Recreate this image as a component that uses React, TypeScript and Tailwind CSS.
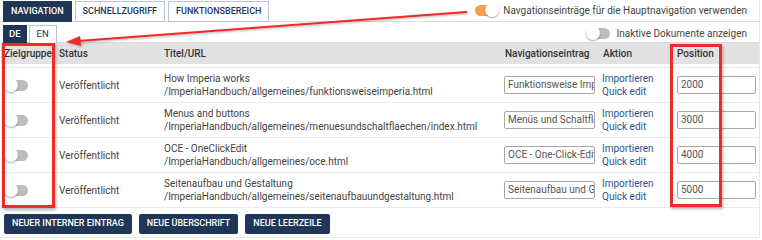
import React from "react";

const rows = [
  { t: "How Imperia works", u: "/ImperiaHandbuch/allgemeines/funktionsweiseimperia.html", n: "Funktionsweise Imperia", p: "2000" },
  { t: "Menus and buttons", u: "/ImperiaHandbuch/allgemeines/menuesundschaltflaechen/index.html", n: "Menüs und Schaltflächen", p: "3000" },
  { t: "OCE - OneClickEdit", u: "/ImperiaHandbuch/allgemeines/oce.html", n: "OCE - One-Click-Edit", p: "4000" },
  { t: "Seitenaufbau und Gestaltung", u: "/ImperiaHandbuch/allgemeines/seitenaufbauundgestaltung.html", n: "Seitenaufbau und Gestaltung", p: "5000" },
];

function Toggle({ on }: { on?: boolean }) {
  return (
    <div className={`relative w-[23px] h-[11px] rounded-full ${on ? "bg-[#f5a04c]" : "bg-[#bdbdbd]"}`}>
      <div
        className={`absolute top-[-1.5px] w-[14px] h-[14px] rounded-full bg-white shadow-[0_1px_2px_rgba(0,0,0,0.35)] ${on ? "right-[-1px]" : "left-[-1px]"}`}
      />
    </div>
  );
}

const cols = "grid grid-cols-[54px_105px_341px_98px_74px_86px]";

export default function App() {
  return (
    <div className="relative w-[762px] h-[240px] bg-white text-[#444] font-['Roboto',sans-serif] text-[10px] overflow-hidden">
      <div className="w-[760px] border-r border-[#e6e6e6] h-[238px] border-b">
        {/* top row */}
        <div className="flex items-end justify-between h-[22px] border-b border-[#dcdcdc] pl-[3px] pr-[12px]">
          <div className="flex gap-[3px] self-stretch pt-[1px]">
            <div className="flex items-center px-[7px] bg-[#1e3657] text-white text-[9px] font-medium border border-[#1e3657] h-[21px]">NAVIGATION</div>
            <div className="flex items-center px-[7px] bg-white text-[#1e3657] text-[9px] font-medium border border-[#b9c3d1] h-[21px]">SCHNELLZUGRIFF</div>
            <div className="flex items-center px-[7px] bg-white text-[#1e3657] text-[9px] font-medium border border-[#b9c3d1] h-[21px]">FUNKTIONSBEREICH</div>
          </div>
          <div className="flex items-center gap-[5px] self-center pb-[1px]">
            <Toggle on />
            <span className="text-[10px] text-[#444]">Navgationseinträge für die Hauptnavigation verwenden</span>
          </div>
        </div>
        {/* second row */}
        <div className="flex items-end justify-between h-[21px] pl-[3px] pr-[12px] border-b border-[#dcdcdc]">
          <div className="flex gap-[2px] pt-[3px] self-stretch">
            <div className="flex items-center px-[6px] bg-[#1e3657] text-white text-[9.5px] font-medium h-[18px]">DE</div>
            <div className="flex items-center px-[7px] bg-white text-[#1e3657] text-[9.5px] border border-b-0 border-[#b9c3d1] h-[18px]">EN</div>
          </div>
          <div className="flex items-center gap-[6px] self-center pt-[2px]">
            <Toggle />
            <span className="text-[10px] text-[#444]">Inaktive Dokumente anzeigen</span>
          </div>
        </div>
        {/* header */}
        <div className={`${cols} h-[21px] items-center bg-[#e2e2e2] font-medium text-[#333] ml-[1px]`}>
          <div className="pl-[3px]">Zielgruppe</div>
          <div className="pl-[4px]">Status</div>
          <div className="pl-[4px]">Titel/URL</div>
          <div className="pl-[4px]">Navigationseintrag</div>
          <div className="pl-[4px]">Aktion</div>
          <div className="pl-[4px]">Position</div>
        </div>
        <div className="h-[3px]" />
        {rows.map((r, i) => (
          <div key={i} className={`${cols} h-[35px] items-center border-t border-[#ececec] ml-[1px]`}>
            <div className="pl-[4px]"><Toggle /></div>
            <div className="pl-[4px]">Veröffentlicht</div>
            <div className="pl-[4px] leading-[13px]">
              <div>{r.t}</div>
              <div>{r.u}</div>
            </div>
            <div className="pl-[3px]">
              <div className="w-[91px] h-[18px] border border-[#a8a8a8] rounded-[2px] px-[3px] text-[10px] leading-[16px] whitespace-nowrap overflow-hidden text-[#555]">{r.n}</div>
            </div>
            <div className="pl-[3px] leading-[13px] text-[#2a5494]">
              <div>Importieren</div>
              <div>Quick edit</div>
            </div>
            <div className="pl-[4px]">
              <div className="w-[79px] h-[18px] border border-[#a8a8a8] rounded-[2px] px-[3px] text-[10px] leading-[16px] text-[#555]">{r.p}</div>
            </div>
          </div>
        ))}
        <div className="flex gap-[7px] pl-[4px] pt-[6px] pb-[3px] border-t border-[#ececec]">
          <div className="h-[20px] px-[8px] flex items-center bg-[#1e3657] text-white text-[9px] font-medium rounded-[2px]">NEUER INTERNER EINTRAG</div>
          <div className="h-[20px] px-[8px] flex items-center bg-[#1e3657] text-white text-[9px] font-medium rounded-[2px]">NEUE ÜBERSCHRIFT</div>
          <div className="h-[20px] px-[8px] flex items-center bg-[#1e3657] text-white text-[9px] font-medium rounded-[2px]">NEUE LEERZEILE</div>
        </div>
      </div>

      {/* red highlight boxes */}
      <div className="absolute left-[2px] top-[43px] w-[53px] h-[165px] border-[3px] border-[#ee2b2b] shadow-[1px_2px_3px_rgba(0,0,0,0.3)]" />
      <div className="absolute left-[670px] top-[44px] w-[52px] h-[163px] border-[3px] border-[#ee2b2b] shadow-[1px_2px_3px_rgba(0,0,0,0.3)]" />
      {/* arrow */}
      <svg className="absolute left-0 top-0" width="762" height="240">
        <defs>
          <filter id="sh" x="-10%" y="-50%" width="120%" height="200%">
            <feDropShadow dx="1" dy="1" stdDeviation="0.8" floodOpacity="0.3" />
          </filter>
        </defs>
        <g filter="url(#sh)">
          <line x1="467" y1="12" x2="78" y2="41" stroke="#ee2b2b" strokeWidth="2.2" />
          <polygon points="66,42 80,36 81,46" fill="#ee2b2b" />
        </g>
      </svg>
    </div>
  );
}
